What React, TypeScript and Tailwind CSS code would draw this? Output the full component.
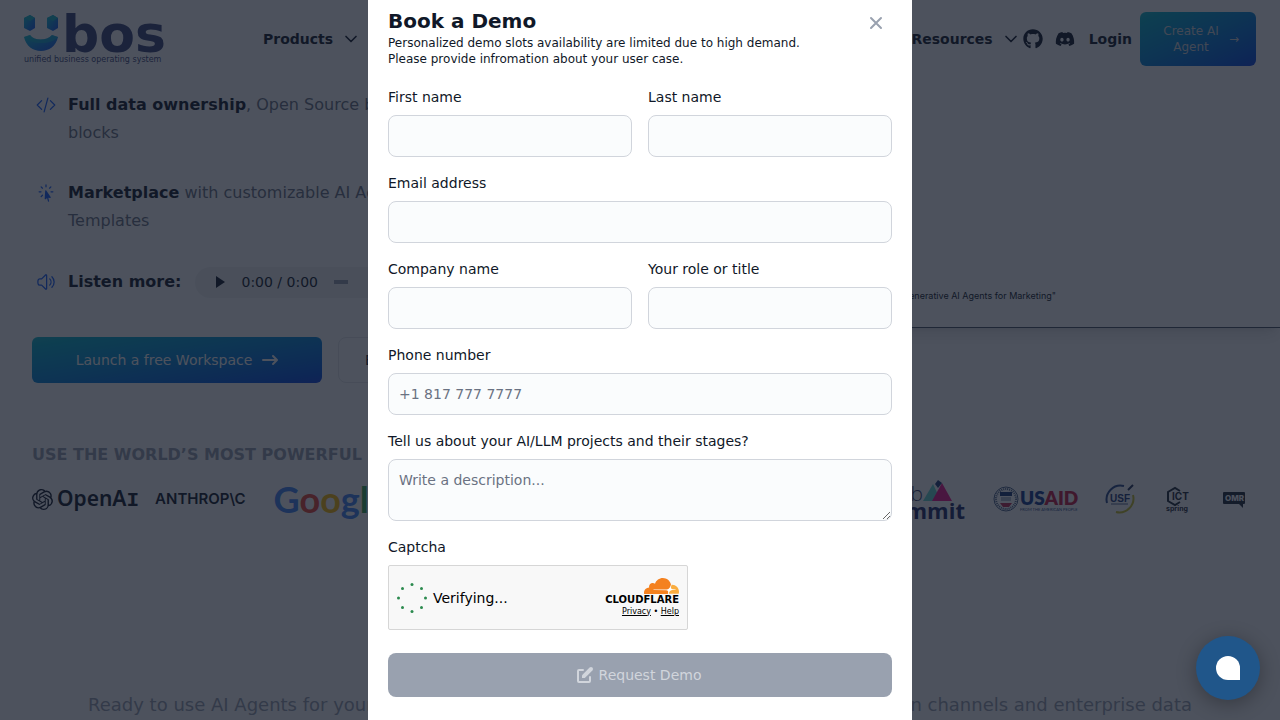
import React from 'react';
import { ChevronDown } from 'lucide-react';
import { FaDiscord, FaGithub } from 'react-icons/fa';
import { HiArrowNarrowRight } from 'react-icons/hi';
import { HiCursorArrowRays, HiOutlineCodeBracket, HiOutlineSpeakerWave } from 'react-icons/hi2';
import { SiOpenai } from 'react-icons/si';

const inputClass =
  'block w-full rounded-lg border border-gray-300 bg-[#fafcfd] p-2.5 text-sm text-gray-900 placeholder:text-gray-500';

function UbosLogo() {
  return (
    <svg viewBox="0 0 146 52" className="h-[52px] w-[146px] shrink-0 overflow-visible" role="img" aria-label="Ubos">
      <defs>
        <linearGradient id="ubos" x1="0" y1="0" x2="1" y2="1">
          <stop offset="0" stopColor="#10c8d0" />
          <stop offset="1" stopColor="#1550f0" />
        </linearGradient>
      </defs>
      <path d="M0 5l6-3 5 3v10l-5 3-6-3z" fill="url(#ubos)" />
      <path d="M23 5l6-3 5 3v10l-5 3-6-3z" fill="url(#ubos)" />
      <path d="M0 5l6-3 5 3-5 3z M23 5l6-3 5 3-5 3z" fill="#14b8c8" />
      <path d="M0 24l6-2c4 6 17 6 22 0l6 2c-2 9-9 14-17 14S2 33 0 24z" fill="url(#ubos)" />
      <path d="M0 24l6-2c4 6 17 6 22 0l6 2c-7 8-26 8-34 0z" fill="#14b8c8" opacity="0.6" />
      <text x="38" y="39" fontSize="52" fontWeight="700" fill="#3a4678" fontFamily="DejaVu Sans, sans-serif">bos</text>
      <text x="0" y="49" fontSize="8" fontWeight="500" fill="#3a4678" fontFamily="DejaVu Sans, sans-serif">
        unified business operating system
      </text>
    </svg>
  );
}

function SummitLogo() {
  return (
    <svg viewBox="0 0 110 44" className="h-11 w-[110px] overflow-visible" role="img" aria-label="Web Summit">
      <text x="69" y="24" textAnchor="end" fontSize="21" fontWeight="300" fill="#2f3a68" fontFamily="Open Sans, sans-serif">web</text>
      <path d="M69 24l10-17 8 17z" fill="#64d8d0" />
      <path d="M78 24l10-18 10 18z" fill="#f0128c" />
      <path d="M81 7l3-4 4 3-4 5z" fill="#1f3a78" />
      <text x="111" y="42" textAnchor="end" fontSize="22" fontWeight="700" fill="#1c2a68" fontFamily="Open Sans, sans-serif">summit</text>
    </svg>
  );
}

function UsaidLogo() {
  return (
    <svg viewBox="0 0 88 30" className="h-[30px] w-[88px] overflow-visible" role="img" aria-label="USAID">
      <circle cx="14" cy="15" r="12" fill="none" stroke="#4a6288" strokeWidth="1" />
      <circle cx="14" cy="15" r="10" fill="none" stroke="#4a6288" strokeWidth="2" strokeDasharray="1 1" />
      <rect x="8" y="8" width="12" height="4" fill="#1a3878" />
      <path d="M9 14h10M9 16h10" stroke="#6a80a0" />
      <path d="M8 19h12l-3 4h-6z" fill="#c02850" />
      <text x="28" y="21" fontSize="19" fontWeight="800" fill="#123a90" fontFamily="Lato, sans-serif">
        US<tspan fill="#c81840">AID</tspan>
      </text>
      <text x="28" y="27" fontSize="4" fill="#304a88" fontFamily="Lato, sans-serif">FROM THE AMERICAN PEOPLE</text>
    </svg>
  );
}

function UsfLogo() {
  return (
    <svg viewBox="0 0 32 32" className="h-8 w-8" role="img" aria-label="USF">
      <path d="M3 20A14 14 0 0 1 20 3" fill="none" stroke="#284888" strokeWidth="2" />
      <path d="M24 7l5-5" stroke="#203058" strokeWidth="2" />
      <path d="M29 12A14 14 0 0 1 12 29" fill="none" stroke="#c8c028" strokeWidth="2" />
      <text x="6" y="19" fontSize="10" fontWeight="700" fill="#1c3878" fontFamily="Liberation Sans, sans-serif">USF</text>
      <path d="M7 21h17" stroke="#50648c" />
    </svg>
  );
}

function IctLogo() {
  return (
    <svg viewBox="0 0 26 28" className="h-7 w-[26px] overflow-visible" role="img" aria-label="ICT Spring">
      <path d="M16 6l-5-3-7 4v9l7 4 5-3" fill="none" stroke="#1f2937" strokeWidth="2" />
      <text x="8" y="15" fontSize="10" fontWeight="700" fill="#1f2937" fontFamily="Inter, sans-serif">ICT</text>
      <text x="2" y="26" fontSize="7" fontWeight="700" fill="#1f2937" fontFamily="Inter, sans-serif">spring</text>
    </svg>
  );
}

function OmrLogo() {
  return (
    <svg viewBox="0 0 24 18" className="h-[18px] w-6" role="img" aria-label="OMR">
      <path d="M2 2h20a1 1 0 0 1 1 1v10a1 1 0 0 1-1 1h-1v4l-4-4H2a1 1 0 0 1-1-1V3a1 1 0 0 1 1-1z" fill="#1f2937" />
      <text x="3" y="11" fontSize="8" fontWeight="800" fill="#ffffff" fontFamily="Inter, sans-serif">OMR</text>
    </svg>
  );
}

function EditIcon() {
  return (
    <svg viewBox="0 0 20 20" className="size-5" fill="currentColor" aria-hidden="true">
      <path d="M17.414 2.586a2 2 0 0 0-2.828 0L7 10.172V13h2.828l7.586-7.586a2 2 0 0 0 0-2.828z" />
      <path d="M2 6a2 2 0 0 1 2-2h4a1 1 0 0 1 0 2H4v10h10v-4a1 1 0 1 1 2 0v4a2 2 0 0 1-2 2H4a2 2 0 0 1-2-2V6z" />
    </svg>
  );
}

function CloudflareMark() {
  return (
    <svg viewBox="0 0 256 116" className="h-4 w-[35px]" role="img" aria-label="Cloudflare">
      <path fill="#fff" d="m202.357 49.394-5.311-2.124C172.085 103.434 72.786 69.289 66.81 85.997c-.996 11.286 54.227 2.146 93.706 4.059 12.039.583 18.076 9.671 12.964 24.484l10.069.031c11.615-36.209 48.683-17.73 50.232-29.68-2.545-7.857-42.601 0-31.425-35.497Z" />
      <path fill="#f4811f" d="M176.332 108.348c1.593-5.31 1.062-10.622-1.593-13.809-2.656-3.187-6.374-5.31-11.154-5.842L71.17 87.634c-.531 0-1.062-.53-1.593-.53-.531-.532-.531-1.063 0-1.594.531-1.062 1.062-1.594 2.124-1.594l92.946-1.062c11.154-.53 22.839-9.56 27.087-20.182l5.312-13.809c0-.532.531-1.063 0-1.594C191.203 20.182 166.772 0 138.091 0 111.535 0 88.697 16.995 80.73 40.896c-5.311-3.718-11.684-5.843-19.12-5.31-12.747 1.061-22.838 11.683-24.432 24.43-.531 3.187 0 6.374.532 9.56C16.996 70.107 0 87.103 0 108.348c0 2.124 0 3.718.531 5.842 0 1.063 1.062 1.594 1.594 1.594h170.489c1.062 0 2.125-.53 2.125-1.594l1.593-5.842Z" />
      <path fill="#faad3f" d="M205.544 48.863h-2.656c-.531 0-1.062.53-1.593 1.062l-3.718 12.747c-1.593 5.31-1.062 10.623 1.594 13.809 2.655 3.187 6.373 5.31 11.153 5.843l19.652 1.062c.53 0 1.062.53 1.593.53.53.532.53 1.063 0 1.594-.531 1.063-1.062 1.594-2.125 1.594l-20.182 1.062c-11.154.53-22.838 9.56-27.087 20.182l-1.063 4.78c-.531.532 0 1.594 1.063 1.594h70.108c1.062 0 1.593-.531 1.593-1.593 1.062-4.25 2.124-9.03 2.124-13.81 0-27.618-22.838-50.456-50.456-50.456" />
    </svg>
  );
}

function Header() {
  return (
    <header className="flex items-center justify-between px-6 py-3 text-sm font-bold text-gray-900">
      <div className="flex items-center gap-[93px]">
        <UbosLogo />
        <button type="button" className="flex items-center gap-2">
          Products
          <ChevronDown size={20} />
        </button>
      </div>
      <div className="flex items-center">
        <button type="button" className="mr-0.5 flex items-center gap-2">
          Resources
          <ChevronDown size={20} />
        </button>
        <a href="#github" aria-label="GitHub" className="mr-3">
          <FaGithub size={20} />
        </a>
        <a href="#discord" aria-label="Discord" className="mr-3.5">
          <FaDiscord size={20} />
        </a>
        <a href="#login" className="mr-2">Login</a>
        <a
          href="#create"
          className="flex h-[54px] w-[116px] items-center justify-center gap-2.5 rounded-md bg-linear-to-br from-[#14b8c8] to-[#1040e0] pl-1.5 text-center text-xs font-normal text-gray-300"
        >
          <span className="w-[56px]">Create AI Agent</span>
          <span>→</span>
        </a>
      </div>
    </header>
  );
}

function AudioPlayer() {
  return (
    <div className="ml-0.5 flex h-[31px] w-[240px] items-center rounded-full bg-[#f1f3f4] px-5 text-sm text-gray-900">
      <button type="button" aria-label="Play">
        <svg viewBox="0 0 10 12" className="h-3 w-2.5" fill="currentColor">
          <path d="M1 0l9 6-9 6z" />
        </svg>
      </button>
      <span className="ml-4 whitespace-nowrap">0:00 / 0:00</span>
      <span className="ml-4 h-1 w-3.5 bg-gray-400" />
    </div>
  );
}

function Hero() {
  return (
    <section className="flex items-start justify-between pl-8">
      <div className="w-[440px] pt-[13px]">
        <ul className="space-y-8 pl-1 leading-7 text-gray-500">
          <li className="flex gap-3">
            <HiOutlineCodeBracket size={20} className="mt-1 shrink-0 text-blue-600" />
            <p><strong className="text-gray-900">Full data ownership</strong>, Open Source building blocks</p>
          </li>
          <li className="flex gap-3">
            <HiCursorArrowRays size={20} className="mt-1 shrink-0 text-blue-600" />
            <p><strong className="text-gray-900">Marketplace</strong> with customizable AI Agents Templates</p>
          </li>
          <li className="flex h-[30px] items-center gap-3">
            <HiOutlineSpeakerWave size={20} className="shrink-0 text-blue-600" />
            <strong className="whitespace-nowrap text-gray-900">Listen more:</strong>
            <AudioPlayer />
          </li>
        </ul>
        <div className="mt-10 flex gap-4">
          <button
            type="button"
            className="flex h-[46px] w-[290px] shrink-0 items-center justify-center gap-2 rounded-md bg-linear-to-br from-[#14b8c8] to-[#1040e0] pl-0.5 text-sm text-white"
          >
            Launch a free Workspace
            <HiArrowNarrowRight size={20} />
          </button>
          <button type="button" className="h-[46px] shrink-0 rounded-lg border border-gray-200 px-[26px] text-sm text-gray-900">
            Book
          </button>
        </div>
      </div>
      <div className="flex h-[250px] w-[640px] items-end justify-end border-b border-gray-600 pr-56 pb-[23px] font-[Inter,sans-serif] text-[9px] leading-4 text-gray-900 shadow-lg">
        "Generative AI Agents for Marketing"
      </div>
    </section>
  );
}

function Partners() {
  return (
    <section className="px-8 pt-[60px]">
      <h2 className="font-bold text-gray-400 uppercase">Use the world’s most powerful</h2>
      <div className="mt-2 flex h-12 items-center justify-between">
        <div className="flex items-center text-gray-900">
          <SiOpenai size={21} />
          <span className="ml-1 font-['Noto_Sans',sans-serif] text-[21px] leading-7 font-semibold">
            OpenA<span className="font-['Liberation_Mono',monospace]">I</span>
          </span>
          <span className="ml-4 font-[Inter,sans-serif] text-[15px] font-semibold">ANTHROP\C</span>
          <span className="ml-7 font-[Lato,sans-serif] text-4xl font-bold">
            <span className="text-[#4285f4]">G</span>
            <span className="text-[#ea4335]">o</span>
            <span className="text-[#fbbc05]">o</span>
            <span className="text-[#4285f4]">g</span>
            <span className="text-[#34a853]">l</span>
            <span className="text-[#ea4335]">e</span>
          </span>
        </div>
        <div className="flex items-center">
          <SummitLogo />
          <div className="ml-7"><UsaidLogo /></div>
          <div className="ml-6"><UsfLogo /></div>
          <div className="ml-7"><IctLogo /></div>
          <div className="mr-[2px] ml-8"><OmrLogo /></div>
        </div>
      </div>
    </section>
  );
}

function Field({ id, label, placeholder, type = 'text', wide = false }: {
  id: string;
  label: string;
  placeholder?: string;
  type?: string;
  wide?: boolean;
}) {
  return (
    <div className={wide ? 'col-span-2' : ''}>
      <label htmlFor={id} className="mb-2 block text-sm text-gray-900">{label}</label>
      <input id={id} type={type} placeholder={placeholder} className={inputClass} />
    </div>
  );
}

function Captcha() {
  return (
    <div className="flex h-[65px] w-[300px] items-center justify-between rounded-xs border border-[#d6d6d6] bg-[#f8f8f8] px-2 text-black">
      <div className="flex items-center gap-1.5 text-sm">
        <svg viewBox="0 0 30 30" className="size-[30px]" fill="#2b8a4e" aria-hidden="true">
          <circle cx="15" cy="1.5" r="1.5" />
          <circle cx="24.5" cy="5.5" r="1.5" />
          <circle cx="28.5" cy="15" r="1.5" />
          <circle cx="24.5" cy="24.5" r="1.5" />
          <circle cx="15" cy="28.5" r="1.5" />
          <circle cx="5.5" cy="24.5" r="1.5" />
          <circle cx="1.5" cy="15" r="1.5" />
          <circle cx="5.5" cy="5.5" r="1.5" />
        </svg>
        Verifying...
      </div>
      <div className="flex flex-col items-end text-[8px] leading-3">
        <CloudflareMark />
        <span className="text-[10px] leading-3 font-bold">CLOUDFLARE</span>
        <span>
          <a href="#privacy" className="underline">Privacy</a> • <a href="#help" className="underline">Help</a>
        </span>
      </div>
    </div>
  );
}

function DemoModal() {
  return (
    <div className="fixed inset-0 z-10 flex justify-center overflow-hidden bg-[#111827]/75">
      <div role="dialog" aria-labelledby="demo-title" className="min-h-full w-[544px] bg-white px-5 pt-[7px] text-gray-900">
        <div className="mb-5 flex items-start justify-between">
          <div>
            <h3 id="demo-title" className="text-xl font-semibold">Book a Demo</h3>
            <p className="text-xs">
              Personalized demo slots availability are limited due to high demand.
              <br />
              Please provide infromation about your user case.
            </p>
          </div>
          <button type="button" aria-label="Close" className="flex size-8 items-center justify-center text-gray-400">
            <svg viewBox="0 0 14 14" className="size-3.5" fill="none" stroke="currentColor" strokeWidth="2" strokeLinecap="round">
              <path d="m2 2 10 10M12 2 2 12" />
            </svg>
          </button>
        </div>
        <form className="grid grid-cols-2 gap-4">
          <Field id="first-name" label="First name" />
          <Field id="last-name" label="Last name" />
          <Field id="email" label="Email address" type="email" wide />
          <Field id="company" label="Company name" />
          <Field id="role" label="Your role or title" />
          <Field id="phone" label="Phone number" type="tel" placeholder="+1 817 777 7777" wide />
          <div className="col-span-2">
            <label htmlFor="projects" className="mb-2 block text-sm">
              Tell us about your AI/LLM projects and their stages?
            </label>
            <textarea id="projects" rows={2} placeholder="Write a description..." className={inputClass} />
          </div>
          <div className="col-span-2">
            <p className="mb-2 text-sm">Captcha</p>
            <Captcha />
          </div>
          <button
            type="submit"
            disabled
            className="col-span-2 mt-[7px] flex h-11 items-center justify-center gap-1 rounded-lg bg-gray-400 pr-1 text-sm text-gray-300"
          >
            <EditIcon />
            Request Demo
          </button>
        </form>
      </div>
    </div>
  );
}

export default function App() {
  return (
    <div className="min-h-screen overflow-hidden bg-white font-['DejaVu_Sans',sans-serif]">
      <Header />
      <Hero />
      <Partners />
      <p className="mt-[168px] flex justify-between px-[88px] text-lg text-gray-400">
        <span>Ready to use AI Agents for your</span>
        <span>communication channels and enterprise data</span>
      </p>
      <DemoModal />
      <button
        type="button"
        aria-label="Open chat"
        className="fixed right-5 bottom-5 z-20 flex size-16 items-center justify-center rounded-full bg-[#20568a] shadow-[0_4px_20px_rgba(0,0,0,0.3)]"
      >
        <span className="size-6 rounded-full rounded-br-none bg-white" />
      </button>
    </div>
  );
}
